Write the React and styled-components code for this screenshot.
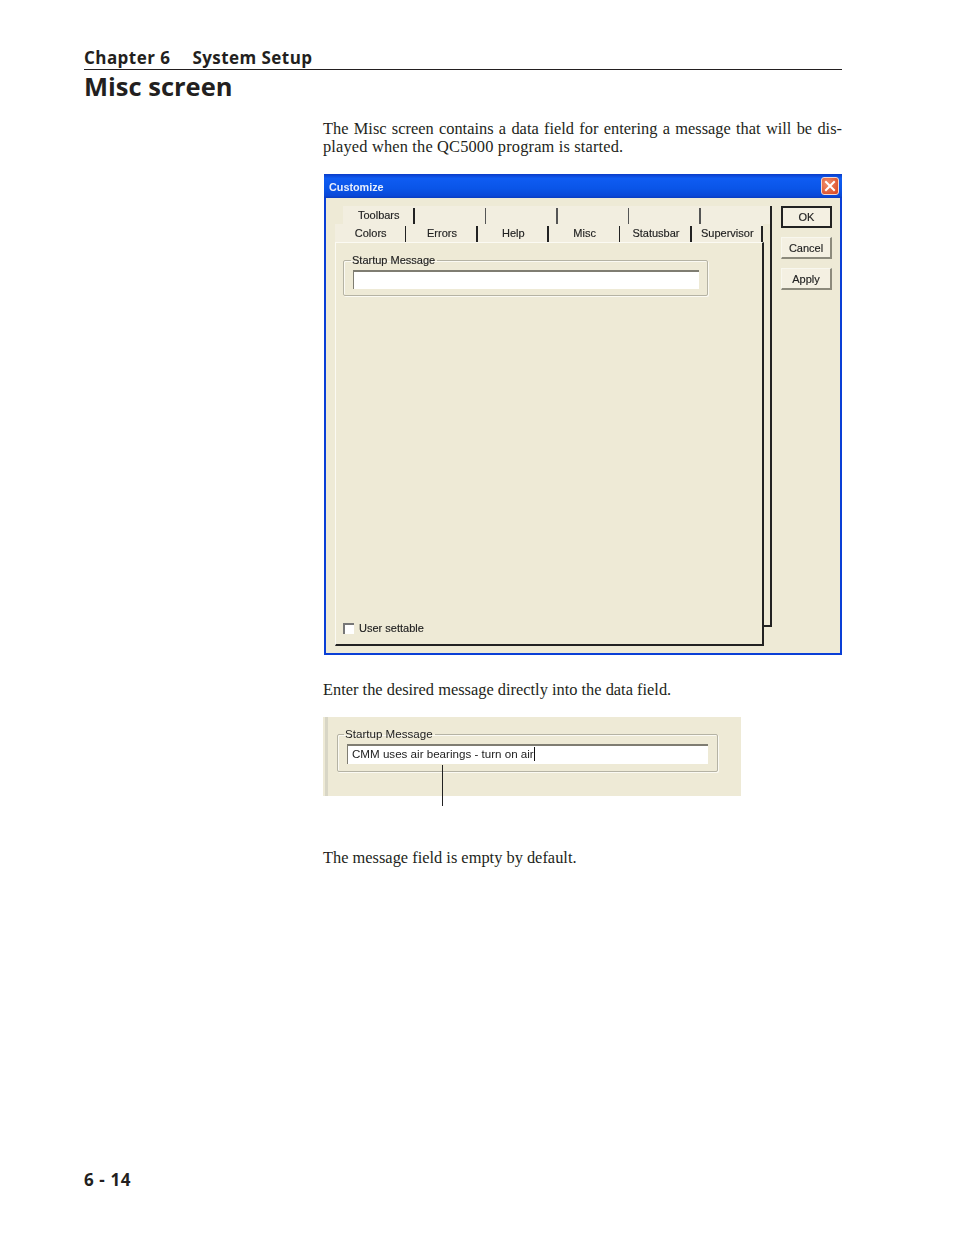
import React from "react";
import styled, { createGlobalStyle } from "styled-components";

const Global = createGlobalStyle`
html,body{margin:0;padding:0;background:#fff;}
`

const Page = styled.div`
box-sizing:border-box;
width:954px;
height:1235px;
padding:47px 112px 0 84px;
display:flex;
flex-direction:column;
color:#231f20;
font-family:"Open Sans","Noto Sans",sans-serif;
overflow:hidden;
`

const Running = styled.div`
display:flex;
gap:22px;
height:22px;
line-height:21px;
font-size:17px;
letter-spacing:.45px;
font-weight:700;
border-bottom:1px solid #231f20;
`

const Title = styled.h1`
margin:0;
font-size:25.5px;
line-height:32px;
font-weight:700;
height:36px;
`

const Content = styled.div`
margin-left:239px;
display:flex;
flex-direction:column;
align-items:flex-start;
`

const Text = styled.p`
margin:${p=>p.$top}px 0 0;
width:100%;
font-family:"Liberation Serif",serif;
font-size:16.4px;
line-height:18px;
color:#231f20;
`

const JustifiedLine = styled.span`
display:block;
white-space:nowrap;
text-align:justify;
text-align-last:justify;
`

const LooseLine = styled.span`
letter-spacing:.16px;
`

const Dialog = styled.div`
box-sizing:border-box;
margin:18px 0 0 1px;
width:518px;
height:481px;
background:#eeead6;
border:solid #0a3fd6;
border-width:0 2px 2px 2px;
display:flex;
flex-direction:column;
font-family:"Liberation Sans",Arial,sans-serif;
font-size:11px;
color:#222;
-webkit-text-stroke:.15px #222;
filter:blur(.35px);
`

const TitleBar = styled.div`
flex:none;
box-sizing:border-box;
height:24px;
margin:0 -2px;
padding:0 3px 0 5px;
display:flex;
align-items:center;
justify-content:space-between;
background:linear-gradient(#0a3cc8 0,#0f5cf2 18%,#0a55e8 60%,#0a48d8 90%,#0a3cc0 100%);
color:#e8eefc;
-webkit-text-stroke:0;
font-weight:700;
font-size:10.8px;
`

const TitleText = styled.span`
padding-top:2px;
`

const CloseButton = styled.div`
width:18px;
height:18px;
box-sizing:border-box;
border:1px solid #f3d8d0;
border-radius:3px;
background:radial-gradient(circle at 35% 35%,#f0906c,#d8401c);
display:flex;
align-items:center;
justify-content:center;
`

const DialogBody = styled.div`
flex:1;
display:flex;
padding:8px 8px 0 9px;
`

const TabArea = styled.div`
position:relative;
width:437px;
height:440px;
display:flex;
flex-direction:column;

&:after{
    content:'';
    position:absolute;
    top:0;
    right:0;
    width:9px;
    height:421px;
    border-right:2px solid #222;
    border-bottom:2px solid #222;
    box-sizing:border-box;
}
`

const TabRow = styled.div`
flex:none;
box-sizing:border-box;
height:18px;
display:flex;
margin-left:${p=>p.$indent}px;
width:${p=>p.$width}px;
background:#f2eee0;
`

const Tab = styled.div`
position:relative;
flex:1;
display:flex;
align-items:center;
justify-content:center;
line-height:18px;

&:after{
    content:'';
    position:absolute;
    top:2px;
    right:0;
    bottom:0;
    width:1.5px;
    background:${p=>p.$blank?'#555':'#222'};
}
`

const Sheet = styled.div`
position:relative;
z-index:1;
box-sizing:border-box;
width:429px;
height:404px;
padding:10px 8px 0 7px;
display:flex;
flex-direction:column;
justify-content:space-between;
border-left:1px solid #fbfaf3;
border-top:1px solid #fbfaf3;
border-right:2px solid #222;
border-bottom:2px solid #222;
`

const Group = styled.fieldset`
box-sizing:border-box;
margin:0;
width:${p=>p.$width}px;
height:${p=>p.$height}px;
padding:${p=>p.$pad};
border:1px solid #b5b3a4;
box-shadow:inset 1px 1px 0 #fbfaf3,1px 1px 0 #fbfaf3;
border-radius:2px;

legend{
    padding:0 2px 0 1px;
    margin-left:${p=>p.$legend}px;
    line-height:14px;
    color:#222;
}
`

const Field = styled.div`
box-sizing:border-box;
height:${p=>p.$height}px;
background:#fff;
border-top:2px solid #7f7d72;
border-left:1px solid #7f7d72;
padding-left:4px;
line-height:${p=>p.$height-4}px;
white-space:nowrap;
`

const Caret = styled.span`
display:inline-block;
width:1px;
height:14px;
background:#111;
vertical-align:-3px;
`

const CheckRow = styled.label`
display:flex;
align-items:center;
gap:5px;
margin-bottom:10px;
`

const CheckBox = styled.span`
box-sizing:border-box;
width:11px;
height:11px;
background:#fff;
border-top:2px solid #777;
border-left:2px solid #777;
`

const ButtonColumn = styled.div`
margin-left:9px;
display:flex;
flex-direction:column;
gap:9px;
`

const Button = styled.div`
box-sizing:border-box;
width:51px;
height:22px;
display:flex;
align-items:center;
justify-content:center;
background:#f4f0e2;
border:${p=>p.$primary?'2px solid #222':'1px solid #f8f7ee'};
border-right:2px solid ${p=>p.$primary?'#222':'#8c8a7c'};
border-bottom:2px solid ${p=>p.$primary?'#222':'#8c8a7c'};
`

const Snippet = styled.div`
position:relative;
box-sizing:border-box;
margin-top:18px;
width:418px;
height:79px;
padding:10px 0 0 14px;
background:#eeead6;
font-family:"Liberation Sans",Arial,sans-serif;
font-size:11.6px;
color:#222;
filter:blur(.3px);

&:before{
    content:'';
    position:absolute;
    top:0;
    bottom:0;
    left:2px;
    width:3px;
    background:#d8d6c6;
}
`

const Callout = styled.div`
position:absolute;
left:119px;
top:48px;
width:1px;
height:41px;
background:#222;
`

const Folio = styled.div`
margin-top:auto;
margin-bottom:43px;
font-size:17px;
letter-spacing:.6px;
font-weight:700;
line-height:24px;
`

const backTabs = ["Toolbars","","","","",""]
const frontTabs = ["Colors","Errors","Help","Misc","Statusbar","Supervisor"]

const App = ()=>{
    return <Page>
        <Global/>
        <Running><span>Chapter 6</span><span>System Setup</span></Running>
        <Title>Misc screen</Title>
        <Content>
            <Text $top={14}>
                <JustifiedLine>The Misc screen contains a data field for entering a message that will be dis-</JustifiedLine>
                <LooseLine>played when the QC5000 program is started.</LooseLine>
            </Text>
            <Dialog>
                <TitleBar>
                    <TitleText>Customize</TitleText>
                    <CloseButton>
                        <svg width="12" height="12" viewBox="0 0 12 12">
                            <path d="M2 2L10 10M10 2L2 10" stroke="#fff" strokeWidth="2" strokeLinecap="square"/>
                        </svg>
                    </CloseButton>
                </TitleBar>
                <DialogBody>
                    <TabArea>
                        <TabRow $indent={8} $width={429}>
                            {backTabs.map((t,i)=><Tab key={i} $blank={!t}>{t}</Tab>)}
                        </TabRow>
                        <TabRow $indent={0} $width={428}>
                            {frontTabs.map(t=><Tab key={t}>{t}</Tab>)}
                        </TabRow>
                        <Sheet>
                            <Group $width={365} $height={43} $pad="3px 8px 0 9px" $legend={-2}>
                                <legend>Startup Message</legend>
                                <Field $height={19}/>
                            </Group>
                            <CheckRow><CheckBox/>User settable</CheckRow>
                        </Sheet>
                    </TabArea>
                    <ButtonColumn>
                        <Button $primary>OK</Button>
                        <Button>Cancel</Button>
                        <Button>Apply</Button>
                    </ButtonColumn>
                </DialogBody>
            </Dialog>
            <Text $top={26}>Enter the desired message directly into the data field.</Text>
            <Snippet>
                <Group $width={381} $height={45} $pad="3px 9px 0 9px" $legend={-3}>
                    <legend>Startup Message</legend>
                    <Field $height={20}>CMM uses air bearings - turn on air<Caret/></Field>
                </Group>
                <Callout/>
            </Snippet>
            <Text $top={53}>The message field is empty by default.</Text>
        </Content>
        <Folio>6 - 14</Folio>
    </Page>
}

export default App;
